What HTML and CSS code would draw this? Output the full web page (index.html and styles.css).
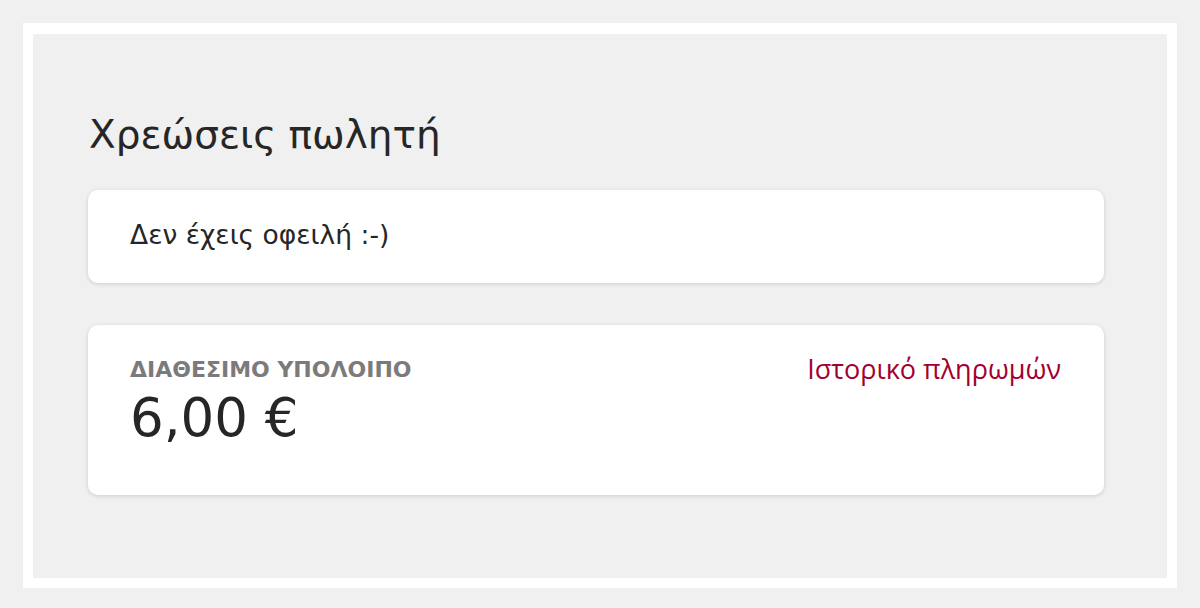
FILE: index.html
```html
<html>
<head>
    <link rel="stylesheet" href="styles.css">
</head>

<body>
    <div class="frame">
        <h1>Χρεώσεις πωλητή</h1>

        <!-- Debt status -->
        <div class="card debt">
            Δεν έχεις οφειλή :-)
        </div>

        <!-- Available balance -->
        <div class="card balance">
            <div class="balance-info">
                <div class="balance-label">ΔΙΑΘΕΣΙΜΟ ΥΠΟΛΟΙΠΟ</div>
                <div class="balance-amount">6,00 €</div>
            </div>
            <a href="#" class="history-link">Ιστορικό πληρωμών</a>
        </div>
    </div>
</body>
</html>
```

FILE: styles.css
```css
body {
    font-family: "DejaVu Sans", sans-serif;
    background-color: #f0f0f0;
    margin: 0;
    padding: 23px 23px 20px 23px;
}

.frame {
    background-color: #f0f0f0;
    border: 10px solid white;
    border-top-width: 11px;
    padding: 77px 63px 0 55px;
    box-sizing: border-box;
    height: 565px;
}

h1 {
    font-size: 39px;
    font-weight: normal;
    line-height: 48px;
    color: #262626;
    margin: 0 0 31px 1px;
}

.card {
    background-color: white;
    border-radius: 10px;
    box-shadow: 0 1px 4px rgba(0, 0, 0, 0.15);
}

.debt {
    font-size: 26.5px;
    line-height: 30px;
    color: #262626;
    padding: 30px 42px 33px;
    margin-bottom: 42px;
}

.balance {
    display: flex;
    justify-content: space-between;
    align-items: flex-start;
    height: 170px;
    box-sizing: border-box;
    padding: 29px 43px 0 42px;
}

.balance-label {
    font-weight: bold;
    font-size: 22px;
    line-height: 24px;
    color: #7b7b7b;
    margin-top: 4px;
}

.balance-amount {
    font-size: 53px;
    line-height: 60px;
    color: #262626;
    margin-top: 6px;
}

.history-link {
    font-family: "Open Sans", sans-serif;
    font-size: 27px;
    line-height: 30px;
    color: #a3002f;
    text-decoration: none;
}
```
